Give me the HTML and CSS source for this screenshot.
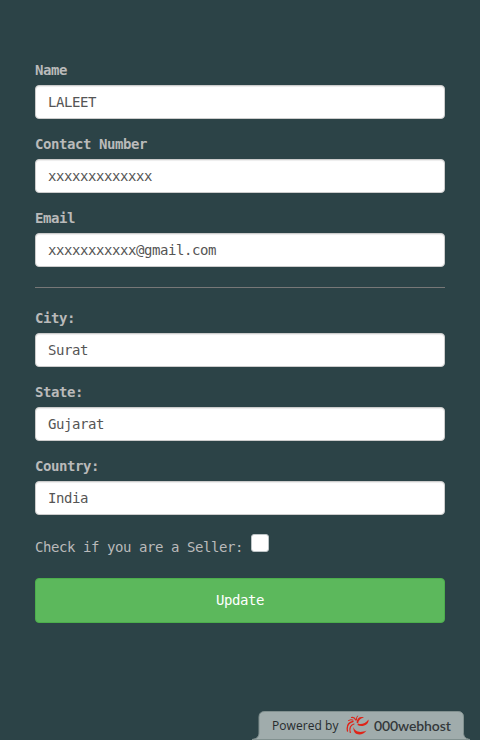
FILE: index.html
```
<!DOCTYPE html>
<html lang="en">
<head>
<meta charset="utf-8">
<title>Update profile</title>
<link rel="stylesheet" href="styles.css">
</head>
<body>
<form class="profile">
  <div class="form-group"><label for="name">Name</label><input class="form-control" id="name" value="LALEET"></div>
  <div class="form-group"><label for="contact">Contact Number</label><input class="form-control" id="contact" value="xxxxxxxxxxxxx"></div>
  <div class="form-group"><label for="email">Email</label><input class="form-control" id="email" value="xxxxxxxxxxx@gmail.com"></div>
  <hr>
  <div class="form-group"><label for="city">City:</label><input class="form-control" id="city" value="Surat"></div>
  <div class="form-group"><label for="state">State:</label><input class="form-control" id="state" value="Gujarat"></div>
  <div class="form-group"><label for="country">Country:</label><input class="form-control" id="country" value="India"></div>
  <div class="seller"><span>Check if you are a Seller:</span><input type="checkbox" class="check" aria-label="Seller"></div>
  <button type="button" class="update">Update</button>
</form>
<div class="badge">
  <svg class="badge-shape" viewBox="0 0 220 30">
    <path d="M2 29.5C8 28.5 9 26 9 22V7Q9 1.5 15 1.5H208Q213.500 1.500 213.500 7V22C213.500 26 214.500 28.500 220 29.500Z" fill="#a0acac" stroke="#81908f"/>
  </svg>
  <div class="badge-content">
    <span class="powered">Powered by</span>
    <svg class="logo" viewBox="0 0 24 22">
      <g fill="#df2418">
        <path d="M10.500 7.500C11 3 14 1 18 2.500C14.500 3 12.500 5 12 8.500Z"/>
        <path d="M12 8.500C15 10 19.500 8.500 22.500 4.500C23.500 9.500 16 13 11.500 10Z"/>
        <path d="M7.500 12C8.500 16.500 14 18.500 20.500 15.500C16.500 21.500 6.500 21 7.500 12Z"/>
      </g>
      <g fill="none" stroke="#df2418" stroke-linecap="round">
        <path d="M1.500 16C.500 11 2.500 7.500 7 6.500" stroke-width="1.300"/>
        <path d="M4.300 17.500C3 13 4.500 10 8 9" stroke-width="1.200"/>
        <path d="M2.500 5.500Q5 4 7 5" stroke-width="1"/>
        <path d="M5.500 2.500Q8.500 2 9.700 5" stroke-width="1.200"/>
        <path d="M11.500 1Q10 2.500 10.500 5" stroke-width="1"/>
      </g>
    </svg>
    <span class="host">000webhost</span>
  </div>
</div>
</body>
</html>
```
FILE: styles.css
```
* { box-sizing: border-box; }
body {
  margin: 0;
  height: 740px;
  overflow: hidden;
  background: #2c4347;
  color: #bababa;
  font: 14px/20px "DejaVu Sans Mono", monospace;
  letter-spacing: -0.428px;
}
.profile { padding: 60px 35px 0; }
.form-group { margin-bottom: 15px; }
label { display: block; margin-bottom: 5px; font-weight: 700; }
.form-control {
  display: block;
  width: 100%;
  height: 34px;
  padding: 6px 12px;
  font: inherit;
  letter-spacing: inherit;
  color: #555;
  background: #fff;
  border: 1px solid #ccc;
  border-radius: 4px;
  box-shadow: inset 0 1px 1px rgba(0, 0, 0, .075);
}
hr { margin: 20px 0; border: 0; border-top: 1px solid #777; }
.seller { display: flex; align-items: flex-start; gap: 8px; height: 29px; padding-top: 4px; }
.seller span { padding-top: 3px; }
.check {
  appearance: none;
  width: 18px;
  height: 18px;
  margin: 0;
  background: #fff;
  border: 1px solid #bdc4c6;
  border-radius: 3px;
}
.update {
  display: block;
  width: 100%;
  height: 45px;
  margin-top: 19px;
  padding: 0 0 2px;
  font: inherit;
  letter-spacing: inherit;
  color: #fff;
  background: #5cb85c;
  border: 1px solid #4cae4c;
  border-radius: 4px;
}
.badge { position: absolute; right: 0; bottom: 0; width: 230px; height: 30px; letter-spacing: 0; }
.badge-shape { position: absolute; left: 0; top: 0; width: 220px; height: 30px; }
.badge-content {
  position: relative;
  display: flex;
  align-items: center;
  height: 30px;
  padding: 1px 0 0 22px;
  color: #262b2d;
}
.powered { width: 74px; font: 12px/20px "Open Sans", sans-serif; letter-spacing: 0.06px; }
.logo { width: 24px; height: 22px; margin-right: 4px; }
.host { font: 600 14px/20px Lato, sans-serif; letter-spacing: -0.1px; color: #34393b; }
```
